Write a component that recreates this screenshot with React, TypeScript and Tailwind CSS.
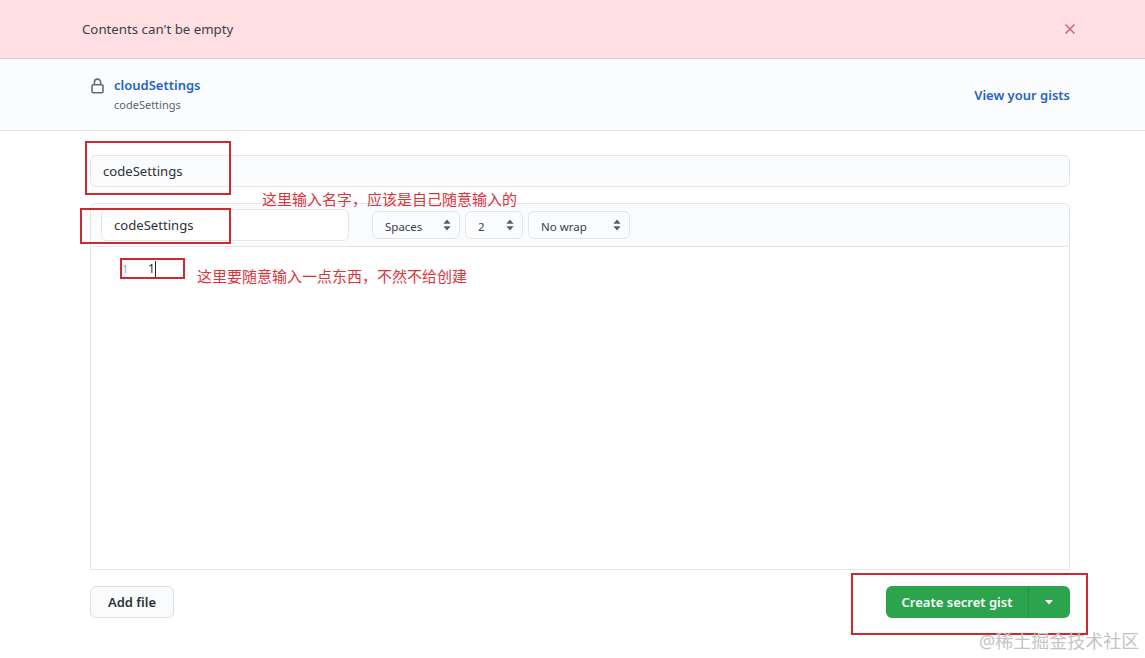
import React from "react";

function Sel({ label, className }: { label: string; className: string }) {
  return (
    <div className={`h-[28px] flex items-center justify-between rounded-[6px] border border-[#e3e6ea] bg-[#fbfcfd] pl-[12px] pr-[8px] text-[11.5px] text-[#3a4048] ${className}`}>
      <span className="pt-[3px]">{label}</span>
      <svg width="8" height="12" viewBox="0 0 8 12" className="fill-[#555c64]">
        <path d="M4 0.5 L7.6 4.8 H0.4 Z" />
        <path d="M4 11.5 L7.6 7.2 H0.4 Z" />
      </svg>
    </div>
  );
}

function Box({ className }: { className: string }) {
  return <div className={`absolute border-2 border-[#cb2a31] ${className}`} />;
}

export default function App() {
  return (
    <div className="relative h-[658px] w-[1145px] overflow-hidden bg-white font-['Noto_Sans','Noto_Sans_CJK_SC',sans-serif] text-[#24292f]">
      <div className="flex h-[59px] items-center justify-between border-b border-[#ecc6d0] bg-[#ffdfe2] pl-[82px] pr-[69px]">
        <span className="pt-[2px] text-[13.25px] text-[#3c4148]">Contents can't be empty</span>
        <svg width="12" height="12" viewBox="0 0 12 12" className="stroke-[#c96a80]" strokeWidth="1.6" fill="none">
          <path d="M1.5 1.5 L10.5 10.5 M10.5 1.5 L1.5 10.5" />
        </svg>
      </div>

      <div className="flex h-[72px] items-center justify-between border-b border-[#e1e4e8] bg-[#fafcfe] pl-[91px] pr-[75px]">
        <div className="flex items-start gap-[10px] pb-[2px]">
          <svg width="13" height="16" viewBox="0 0 13 16" fill="none" className="mt-[4px] stroke-[#636a72]" strokeWidth="1.6">
            <rect x="1" y="6.8" width="11" height="8" rx="1.2" />
            <path d="M3.4 6.8 V4.2 a3.1 3.1 0 0 1 6.2 0 V6.8" />
          </svg>
          <div className="flex flex-col pt-[1px]">
            <span className="text-[13px] leading-[20px] font-semibold text-[#2464c4]">cloudSettings</span>
            <span className="text-[11px] leading-[19px] text-[#5c636b]">codeSettings</span>
          </div>
        </div>
        <span className="pt-[2px] text-[13px] font-semibold text-[#2464c4]">View your gists</span>
      </div>

      <div className="flex flex-col pl-[90px] pr-[75px] pt-[24px]">
        <div className="flex h-[32px] items-center rounded-[6px] border border-[#e3e6ea] bg-[#fafbfc] pl-[12px] pt-[2px] text-[13.1px] text-[#2c3138]">
          codeSettings
        </div>

        <div className="mt-[16px] flex h-[367px] flex-col rounded-t-[6px] border border-[#e3e6ea]">
          <div className="flex h-[43px] items-center rounded-t-[6px] border-b border-[#e3e6ea] bg-[#fafbfc] pl-[10px]">
            <div className="flex h-[32px] w-[248px] items-center rounded-[6px] border border-[#e3e6ea] bg-white pl-[12px] pt-[2px] text-[13.1px] text-[#2c3138]">
              codeSettings
            </div>
            <div className="ml-[23px] flex gap-[5px]">
              <Sel label="Spaces" className="w-[88px]" />
              <Sel label="2" className="w-[58px]" />
              <Sel label="No wrap" className="w-[102px]" />
            </div>
          </div>
          <div className="flex pl-[31px] pt-[14px] text-[11px] leading-[16px]">
            <span className="w-[26px] text-[#a0a4a9]">1</span>
            <span className="border-r border-[#24292f] text-[12px] text-[#2c3138]">1</span>
          </div>
        </div>

        <div className="mt-[16px] flex items-center justify-between">
          <div className="flex h-[32px] w-[84px] items-center justify-center rounded-[6px] border border-[#dcdfe3] bg-[#fafbfc] pt-[2px] text-[13px] font-semibold text-[#2c3138]">
            Add file
          </div>
          <div className="flex h-[32px] w-[184px] items-center rounded-[6px] bg-[#2ca44e] text-white">
            <span className="flex h-full w-[143px] items-center justify-center border-r border-[#27914a] pt-[2px] text-[13px] font-semibold">
              Create secret gist
            </span>
            <span className="flex flex-1 items-center justify-center pr-[2px]">
              <svg width="8" height="5" viewBox="0 0 8 5" className="fill-white">
                <path d="M0 0 H8 L4 4.5 Z" />
              </svg>
            </span>
          </div>
        </div>
      </div>

      <Box className="left-[85px] top-[141px] h-[54px] w-[146px]" />
      <Box className="left-[80px] top-[208px] h-[36px] w-[151px]" />
      <Box className="left-[120px] top-[258px] h-[21px] w-[65px]" />
      <Box className="left-[851px] top-[573px] h-[62px] w-[237px]" />

      <span className="absolute left-[262px] top-[189px] text-[15px] leading-[20px] text-[#e0323c]">这里输入名字，应该是自己随意输入的</span>
      <span className="absolute left-[197px] top-[266px] text-[15px] leading-[20px] text-[#e0323c]">这里要随意输入一点东西，不然不给创建</span>
      <span className="absolute left-[979px] top-[631px] text-[18px] leading-[20px] text-[#c4c4c4]">@稀土掘金技术社区</span>
    </div>
  );
}
